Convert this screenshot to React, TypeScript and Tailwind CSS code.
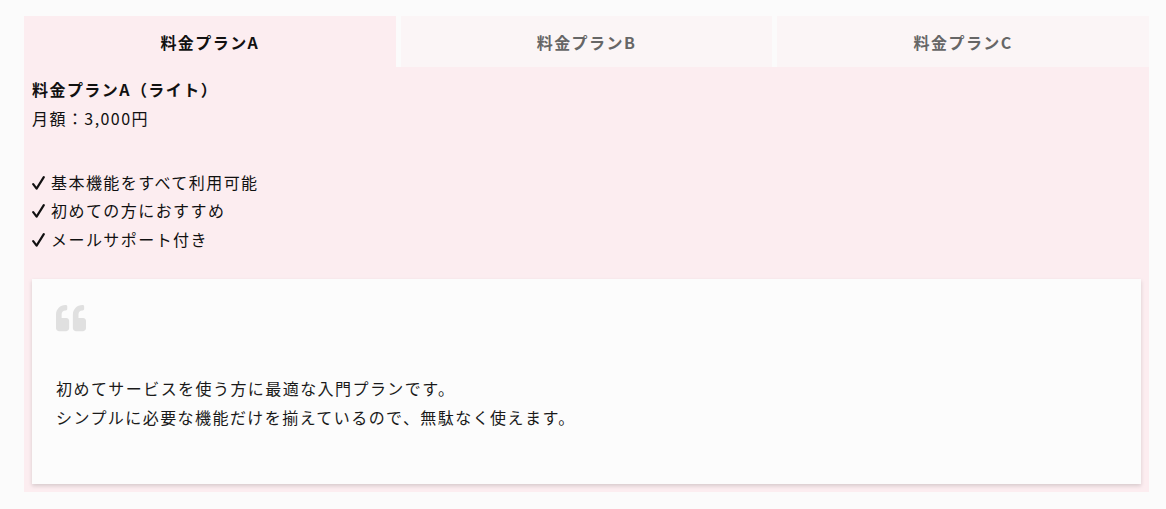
import React from "react";
import { FaQuoteLeft } from "react-icons/fa";

function Check() {
  return (
    <svg className="mr-[6px] inline-block align-[-1px]" width="13" height="14" viewBox="0 0 13 14" fill="none">
      <path d="M1.2 8.2 L4.6 12.6 L11.8 1.2" stroke="#111" strokeWidth="2.2" strokeLinecap="round" strokeLinejoin="round" />
    </svg>
  );
}

export default function App() {
  const font = { fontFamily: '"Noto Sans CJK JP", "Noto Sans", sans-serif' };
  return (
    <div className="min-h-[509px] w-full bg-[#fbfbfb] pl-[24px] pr-[17px] pt-[16px] pb-[16px] text-[16px] tracking-[0.09em] text-[#111]" style={font}>
      <div className="flex gap-[5px]">
        <div className="flex h-[51px] flex-1 items-center justify-center bg-[#fcedf0] font-bold text-[#111]">料金プランA</div>
        <div className="flex h-[51px] flex-1 items-center justify-center bg-[#fbf5f6] font-bold text-[#666]">料金プランB</div>
        <div className="flex h-[51px] flex-1 items-center justify-center bg-[#fbf5f6] font-bold text-[#666]">料金プランC</div>
      </div>
      <div className="bg-[#fcedf0] p-[8px] leading-[28.8px]">
        <p className="font-bold">料金プランA（ライト）</p>
        <p>月額：3,000円</p>
        <ul className="mt-[35px]">
          <li className="h-[28.8px]"><Check />基本機能をすべて利用可能</li>
          <li className="h-[28.8px]"><Check />初めての方におすすめ</li>
          <li className="h-[28.8px]"><Check />メールサポート付き</li>
        </ul>
        <div className="mt-[25px] h-[205px] bg-[#fcfcfc] px-[24px] pt-[24px] shadow-[0_2px_4px_rgba(0,0,0,0.15)]">
          <FaQuoteLeft className="text-[#e0e0e0]" size={30} />
          <div className="mt-[41px] text-[#1a1a1a]">
            <p>初めてサービスを使う方に最適な入門プランです。</p>
            <p>シンプルに必要な機能だけを揃えているので、無駄なく使えます。</p>
          </div>
        </div>
      </div>
    </div>
  );
}
